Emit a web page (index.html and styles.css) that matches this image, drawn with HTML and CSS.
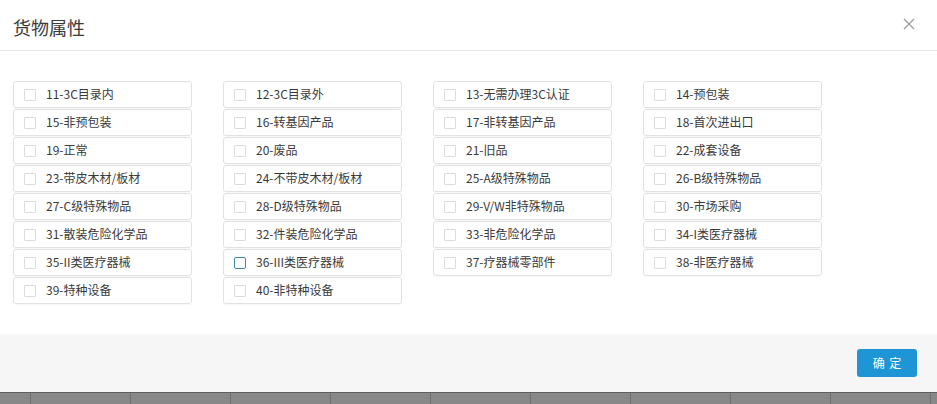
FILE: index.html
```html
<!DOCTYPE html>
<html lang="zh-CN">
<head>
<meta charset="utf-8">
<title>货物属性</title>
<link rel="stylesheet" href="styles.css">
</head>
<body>
<div class="modal">
  <div class="modal-header">
    <h3 class="modal-title">货物属性</h3>
    <span class="close">
      <svg width="12" height="12" viewBox="0 0 12 12"><path d="M1 1L11 11M11 1L1 11" stroke="#9a9a9a" stroke-width="1.2" fill="none"/></svg>
    </span>
  </div>
  <div class="modal-body">
    <div class="grid">
      <label class="item"><span class="cb"></span><span class="lbl">11-3C目录内</span></label>
      <label class="item"><span class="cb"></span><span class="lbl">12-3C目录外</span></label>
      <label class="item"><span class="cb"></span><span class="lbl">13-无需办理3C认证</span></label>
      <label class="item"><span class="cb"></span><span class="lbl">14-预包装</span></label>
      <label class="item"><span class="cb"></span><span class="lbl">15-非预包装</span></label>
      <label class="item"><span class="cb"></span><span class="lbl">16-转基因产品</span></label>
      <label class="item"><span class="cb"></span><span class="lbl">17-非转基因产品</span></label>
      <label class="item"><span class="cb"></span><span class="lbl">18-首次进出口</span></label>
      <label class="item"><span class="cb"></span><span class="lbl">19-正常</span></label>
      <label class="item"><span class="cb"></span><span class="lbl">20-废品</span></label>
      <label class="item"><span class="cb"></span><span class="lbl">21-旧品</span></label>
      <label class="item"><span class="cb"></span><span class="lbl">22-成套设备</span></label>
      <label class="item"><span class="cb"></span><span class="lbl">23-带皮木材/板材</span></label>
      <label class="item"><span class="cb"></span><span class="lbl">24-不带皮木材/板材</span></label>
      <label class="item"><span class="cb"></span><span class="lbl">25-A级特殊物品</span></label>
      <label class="item"><span class="cb"></span><span class="lbl">26-B级特殊物品</span></label>
      <label class="item"><span class="cb"></span><span class="lbl">27-C级特殊物品</span></label>
      <label class="item"><span class="cb"></span><span class="lbl">28-D级特殊物品</span></label>
      <label class="item"><span class="cb"></span><span class="lbl">29-V/W非特殊物品</span></label>
      <label class="item"><span class="cb"></span><span class="lbl">30-市场采购</span></label>
      <label class="item"><span class="cb"></span><span class="lbl">31-散装危险化学品</span></label>
      <label class="item"><span class="cb"></span><span class="lbl">32-件装危险化学品</span></label>
      <label class="item"><span class="cb"></span><span class="lbl">33-非危险化学品</span></label>
      <label class="item"><span class="cb"></span><span class="lbl">34-I类医疗器械</span></label>
      <label class="item"><span class="cb"></span><span class="lbl">35-II类医疗器械</span></label>
      <label class="item"><span class="cb cb-hover"></span><span class="lbl">36-III类医疗器械</span></label>
      <label class="item"><span class="cb"></span><span class="lbl">37-疗器械零部件</span></label>
      <label class="item"><span class="cb"></span><span class="lbl">38-非医疗器械</span></label>
      <label class="item"><span class="cb"></span><span class="lbl">39-特种设备</span></label>
      <label class="item"><span class="cb"></span><span class="lbl">40-非特种设备</span></label>
    </div>
  </div>
  <div class="modal-footer">
    <button class="btn-primary">确 定</button>
  </div>
</div>
<div class="backdrop-table"></div>
</body>
</html>
```

FILE: styles.css
```css
html, body {
  margin: 0;
  padding: 0;
  background: #ffffff;
  font-family: "Noto Sans CJK SC", "Liberation Sans", sans-serif;
  color: #333333;
}

.modal {
  width: 937px;
  background: #ffffff;
}

.modal-header {
  height: 50px;
  border-bottom: 1px solid #e5e5e5;
  display: flex;
  align-items: center;
  justify-content: space-between;
  padding: 0 22px 0 13px;
  box-sizing: content-box;
}

.modal-title {
  margin: 0;
  font-size: 18px;
  font-weight: normal;
  color: #3a3a3a;
  line-height: 24px;
  padding-top: 3px;
}

.close {
  display: flex;
  width: 12px;
  height: 12px;
  margin-top: -2px;
}

.modal-body {
  padding: 30px 13px 30px 13px;
}

.grid {
  display: grid;
  grid-template-columns: repeat(4, 179px);
  column-gap: 31px;
  row-gap: 1px;
}

.item {
  height: 27px;
  box-sizing: border-box;
  border: 1px solid #e2e2e2;
  border-radius: 3px;
  display: flex;
  align-items: center;
  padding-left: 10px;
  font-size: 12px;
  color: #3a3a3a;
  box-shadow: 0 1px 1px rgba(0,0,0,0.03);
}

.cb {
  width: 12px;
  height: 12px;
  box-sizing: border-box;
  border: 1px solid #dcdcdc;
  border-radius: 1px;
  margin-right: 10px;
  flex: none;
}

.cb-hover {
  border-color: #3f8aa0;
  border-radius: 2px;
}

.lbl {
  white-space: nowrap;
  line-height: 16px;
  margin-top: -2px;
}

.modal-footer {
  background: #f6f6f6;
  height: 58px;
  display: flex;
  align-items: center;
  justify-content: flex-end;
  padding-right: 20px;
}

.btn-primary {
  width: 60px;
  height: 28px;
  border: none;
  border-radius: 3px;
  background: #1e96d6;
  color: #ffffff;
  font-family: "Noto Sans CJK SC", "Liberation Sans", sans-serif;
  font-size: 12px;
  letter-spacing: 1px;
  padding: 0 0 2px 1px;
}

.backdrop-table {
  height: 11px;
  border-top: 1px solid #5e5e5e;
  background-color: #888888;
  background-image: repeating-linear-gradient(to right, transparent 0, transparent 30px, #6e6e6e 30px, #6e6e6e 31px, transparent 31px, transparent 100px);
}
```
